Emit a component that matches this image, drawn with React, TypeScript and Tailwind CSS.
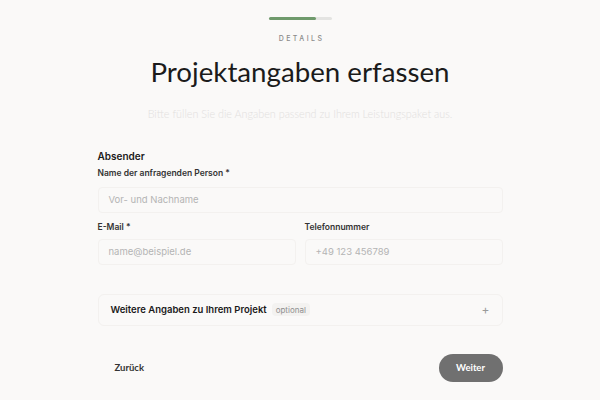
import React from "react";

export default function App() {
  return (
    <div className="w-[600px] h-[400px] bg-[#faf9f8] overflow-hidden flex flex-col items-center" style={{ fontFamily: "Inter, 'Liberation Sans', sans-serif" }}>
      <div className="mt-[17px] w-[63px] h-[3px] bg-[#e4e4e2] rounded-full flex">
        <div className="w-[47px] h-[3px] bg-[#6f9a6c] rounded-full" />
      </div>
      <div className="mt-[14px] text-[7px] tracking-[0.35em] text-[#8a8a8a] font-medium pl-[3px]">DETAILS</div>
      <h1 className="mt-[11px] text-[27.7px] leading-[32px] text-[#1b1b1b] font-normal" style={{ fontFamily: "Lato, 'Noto Sans', sans-serif" }}>Projektangaben erfassen</h1>
      <p className="mt-[18px] text-[10.8px] text-[#e2e0de] font-light" style={{ fontFamily: "Lato, sans-serif" }}>Bitte füllen Sie die Angaben passend zu Ihrem Leistungspaket aus.</p>

      <div className="w-[405px] mt-[28px] flex flex-col">
        <div className="text-[10px] font-semibold text-[#1a1a1a] leading-[12px]">Absender</div>
        <label className="mt-[6px] text-[8.5px] font-semibold text-[#333] leading-[11px]">Name der anfragenden Person *</label>
        <div className="mt-[8px] h-[26px] border border-[#f3f1ef] rounded-[4px] flex items-center pl-[10px] text-[9.5px] text-[#b4b4b4]">Vor- und Nachname</div>

        <div className="mt-[9px] grid grid-cols-2 gap-[9px]">
          <div className="flex flex-col">
            <label className="text-[8.5px] font-semibold text-[#333] leading-[11px]">E-Mail *</label>
            <div className="mt-[6px] h-[26px] border border-[#f3f1ef] rounded-[4px] flex items-center pl-[10px] text-[9.5px] text-[#b4b4b4]">name@beispiel.de</div>
          </div>
          <div className="flex flex-col">
            <label className="text-[8.5px] font-semibold text-[#333] leading-[11px]">Telefonnummer</label>
            <div className="mt-[6px] h-[26px] border border-[#f3f1ef] rounded-[4px] flex items-center pl-[10px] text-[9.5px] text-[#b4b4b4]">+49 123 456789</div>
          </div>
        </div>

        <div className="mt-[29px] h-[32px] border border-[#f3f1ef] rounded-[6px] flex items-center pl-[12px] pr-[12px]">
          <span className="text-[9.5px] font-semibold text-[#1a1a1a]">Weitere Angaben zu Ihrem Projekt</span>
          <span className="ml-[5px] px-[4px] h-[13px] flex items-center rounded-[4px] bg-[#f3f2f0] text-[8px] text-[#8f8f8f]">optional</span>
          <span className="ml-auto text-[12px] text-[#9a9a9a] leading-none">+</span>
        </div>

        <div className="mt-[28px] flex items-center justify-between">
          <button className="ml-[17px] text-[9.5px] font-bold text-[#333]" style={{ fontFamily: "Lato, sans-serif" }}>Zurück</button>
          <button className="w-[64px] h-[28px] rounded-full bg-[#707070] text-white text-[9.5px] font-bold" style={{ fontFamily: "Lato, sans-serif" }}>Weiter</button>
        </div>
      </div>
    </div>
  );
}
